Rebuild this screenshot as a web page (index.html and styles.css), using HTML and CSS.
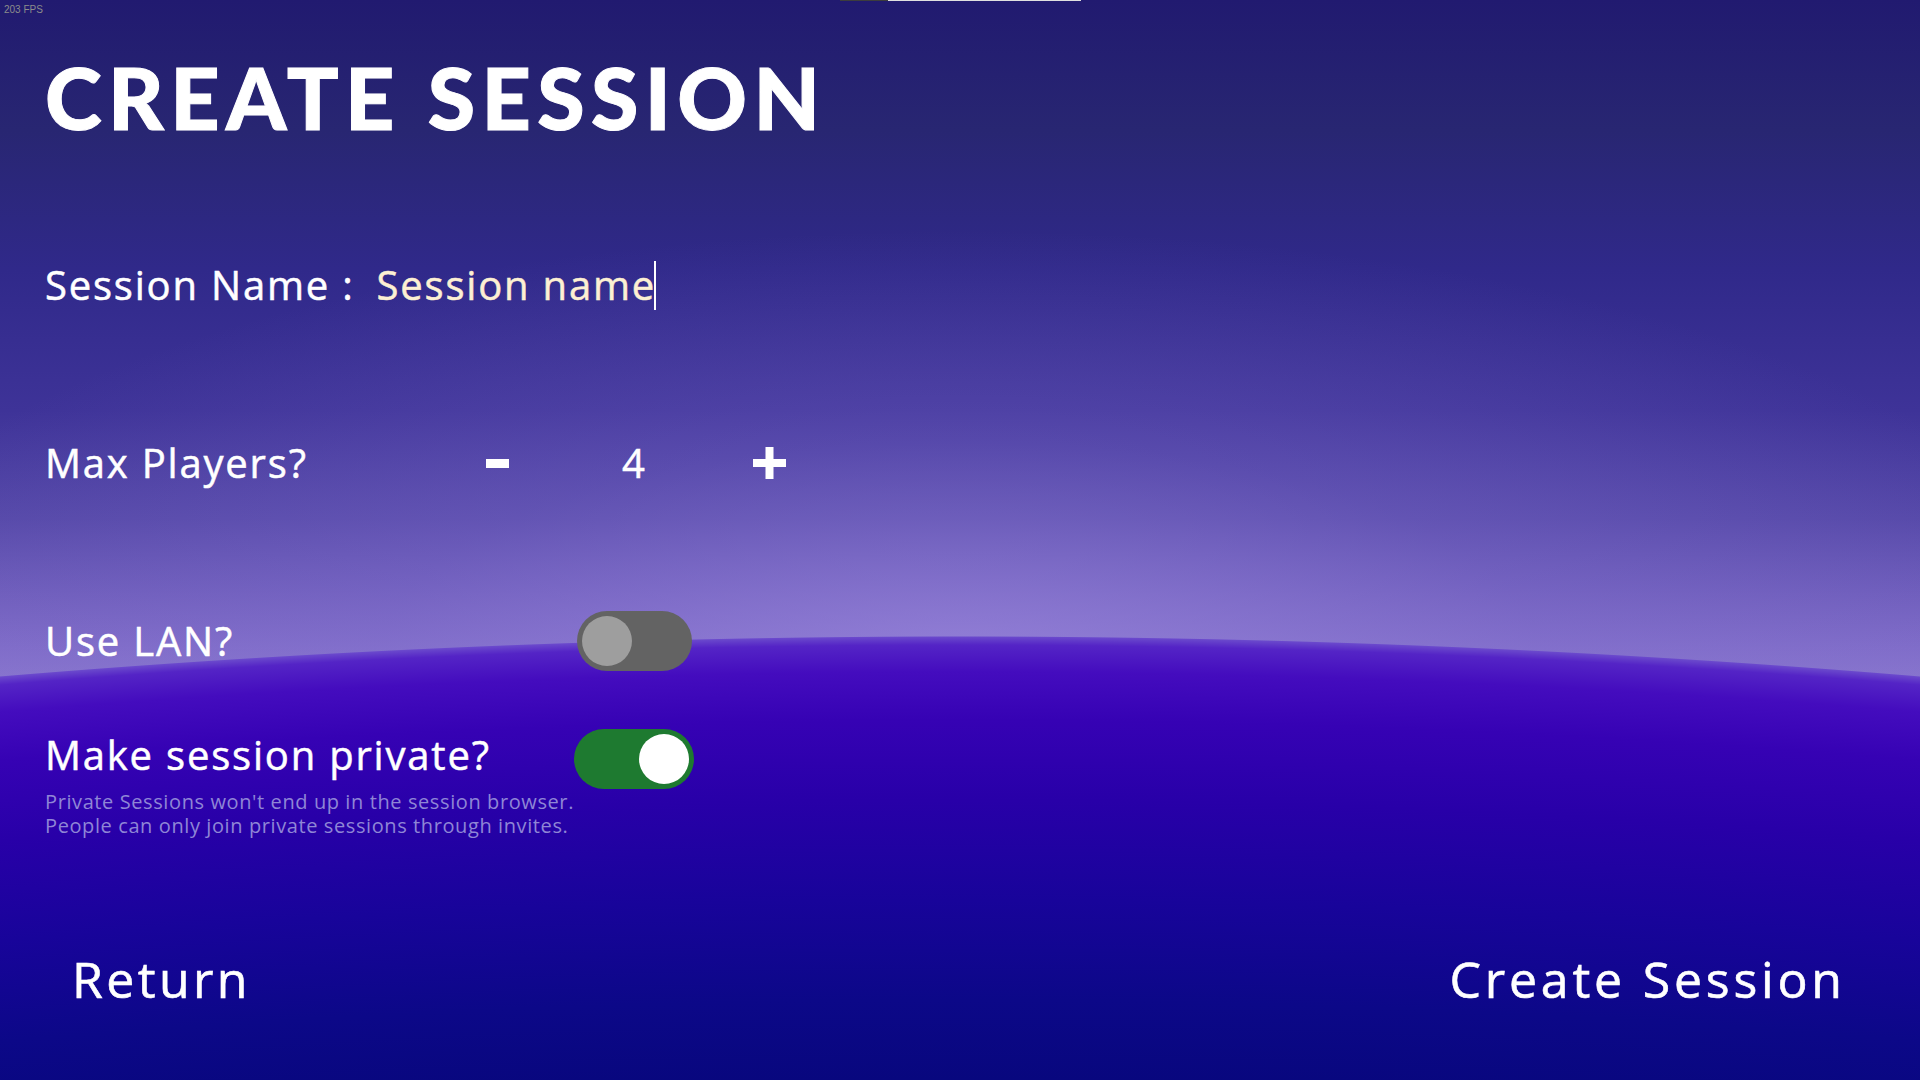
FILE: index.html
```html
<!DOCTYPE html>
<html lang="en">
<head>
<meta charset="utf-8">
<title>Create Session</title>
<link rel="stylesheet" href="styles.css">
</head>
<body>
<div class="screen">
  <div class="fps">203 FPS</div>
  <div class="loadbar"><span class="loadbar-dark"></span><span class="loadbar-light"></span></div>

  <h1 class="title">CREATE SESSION</h1>

  <div class="row row-name">
    <span class="label">Session Name :</span>
    <span class="value">Session name<span class="caret"></span></span>
  </div>

  <div class="row row-stepper">
    <span class="label">Max Players?</span>
    <span class="step-btn">
      <svg width="23" height="9" viewBox="0 0 23 9"><rect x="0" y="0" width="23" height="9" fill="#fff"/></svg>
    </span>
    <span class="step-value">4</span>
    <span class="step-btn">
      <svg width="33" height="32" viewBox="0 0 33 32"><rect x="0" y="12" width="33" height="8" fill="#fff"/><rect x="12.5" y="0" width="8" height="32" fill="#fff"/></svg>
    </span>
  </div>

  <div class="row row-toggle row-lan">
    <span class="label">Use LAN?</span>
    <span class="toggle toggle-off"><span class="knob"></span></span>
  </div>

  <div class="row row-toggle row-private">
    <span class="label">Make session private?</span>
    <span class="toggle toggle-on"><span class="knob"></span></span>
  </div>
  <p class="hint">Private Sessions won't end up in the session browser.<br>People can only join private sessions through invites.</p>

  <div class="footer">
    <span class="action">Return</span>
    <span class="action action-create">Create Session</span>
  </div>
</div>
</body>
</html>
```

FILE: styles.css
```css
html, body {
  margin: 0;
  padding: 0;
}

body {
  width: 1920px;
  height: 1080px;
  overflow: hidden;
  font-family: "Open Sans", "Noto Sans", sans-serif;
  color: #ffffff;
}

.screen {
  position: relative;
  width: 1920px;
  height: 1080px;
  box-sizing: border-box;
  padding: 0 45px;
  display: flex;
  flex-direction: column;
  background:
    radial-gradient(circle 11540px at 960px 12177px,
      #08077e 11097px,
      #0c0888 11177px,
      #18049a 11277px,
      #2800a8 11377px,
      #3602b4 11457px,
      #440cbe 11505px,
      #5424c6 11532px,
      #6a48cc 11540px,
      rgba(0,0,0,0) 11541px),
    radial-gradient(ellipse 1150px 420px at 960px 650px,
      rgba(160,140,225,0.55) 0%,
      rgba(140,120,215,0.25) 50%,
      rgba(120,100,200,0) 100%),
    linear-gradient(180deg,
      #211a70 0%,
      #282672 12%,
      #30298a 25%,
      #3e3398 38%,
      #5548a8 48%,
      #6e5dbb 55%,
      #7f6cc8 60%,
      #8a78cf 64%);
}

.fps {
  position: absolute;
  left: 4px;
  top: 4px;
  font-family: "Liberation Sans", Arial, sans-serif;
  font-size: 10px;
  line-height: 12px;
  color: #8c8c8c;
}

.loadbar {
  position: absolute;
  left: 840px;
  top: 0;
  display: flex;
  height: 1px;
}
.loadbar-dark {
  width: 48px;
  background: #3d3d3d;
}
.loadbar-light {
  width: 193px;
  background: #e0e0e0;
}

.title {
  margin: 54px 0 0 0;
  font-family: "Lato", "Open Sans", sans-serif;
  font-weight: 900;
  font-size: 86px;
  line-height: 86px;
  letter-spacing: 6.4px;
  color: #ffffff;
  -webkit-text-stroke: 1px #ffffff;
}

.row {
  height: 60px;
  display: flex;
  align-items: center;
}

.label {
  font-size: 40px;
  line-height: 40px;
  letter-spacing: 0.045em;
  white-space: nowrap;
  -webkit-text-stroke: 0.5px #ffffff;
}

.row-name {
  margin-top: 115px;
}

.value {
  position: relative;
  margin-left: 22px;
  font-size: 40px;
  line-height: 40px;
  letter-spacing: 0.045em;
  color: #fdf0d3;
  -webkit-text-stroke: 0.5px #fdf0d3;
}

.caret {
  position: absolute;
  right: 0;
  top: -4px;
  width: 2px;
  height: 49px;
  background: #ffffff;
}

.row-stepper {
  margin-top: 118px;
  display: grid;
  grid-template-columns: 384.5px 136px 136px 136px;
  align-items: center;
}

.step-btn {
  display: flex;
  justify-content: center;
  align-items: center;
}

.step-value {
  text-align: center;
  font-size: 40px;
  line-height: 40px;
  color: #ffffff;
  -webkit-text-stroke: 0.5px #ffffff;
}

.row-toggle {
  display: grid;
  grid-template-columns: 529px 120px;
  align-items: center;
}

.row-lan {
  margin-top: 118px;
}

.row-private {
  margin-top: 58px;
}
.row-private .label {
  position: relative;
  top: -4px;
}

.toggle {
  justify-self: center;
  display: flex;
  align-items: center;
  box-sizing: border-box;
  height: 60px;
  border-radius: 30px;
  padding: 5px;
}

.toggle .knob {
  width: 50px;
  height: 50px;
  border-radius: 50%;
}

.toggle-off {
  width: 115px;
  background: #636363;
  justify-content: flex-start;
}
.toggle-off .knob {
  background: #9e9e9e;
}

.toggle-on {
  width: 120px;
  background: #1e7a30;
  justify-content: flex-end;
}
.toggle-on .knob {
  background: #ffffff;
}

.hint {
  margin: 1px 0 0 0;
  font-size: 20px;
  line-height: 24px;
  letter-spacing: 0.03em;
  color: #8f86d6;
}

.footer {
  margin-top: auto;
  margin-bottom: 76px;
  padding: 0 33px 0 27px;
  display: flex;
  justify-content: space-between;
  align-items: center;
}

.action {
  font-size: 50px;
  line-height: 50px;
  letter-spacing: 3.4px;
  color: #ffffff;
  -webkit-text-stroke: 0.6px #ffffff;
}
.action-create {
  letter-spacing: 3.8px;
  margin-right: -3.8px;
}
```
